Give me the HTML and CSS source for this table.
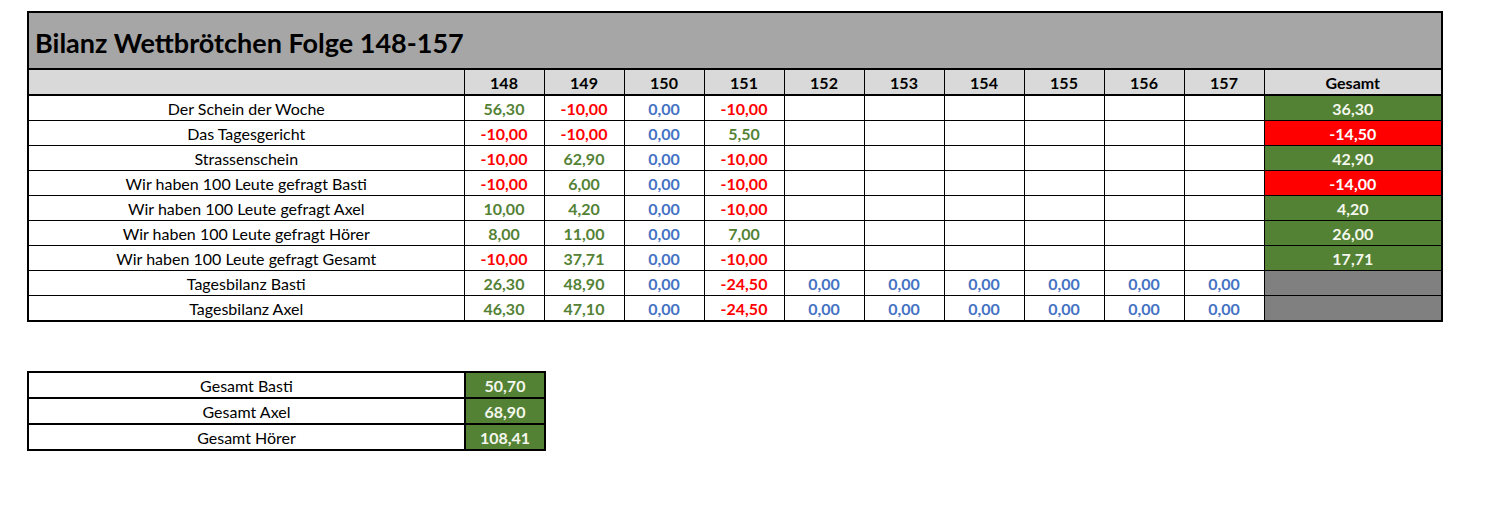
FILE: index.html
```html
<!DOCTYPE html>
<html lang="de">
<head>
<meta charset="utf-8">
<title>Bilanz Wettbrötchen</title>
<link rel="stylesheet" href="styles.css">
</head>
<body>
<table class="sheet">
  <colgroup>
    <col class="c-label">
    <col class="c-num"><col class="c-num"><col class="c-num"><col class="c-num"><col class="c-num">
    <col class="c-num"><col class="c-num"><col class="c-num"><col class="c-num"><col class="c-num">
    <col class="c-total">
  </colgroup>
  <tr class="title-row"><td colspan="12" class="title">Bilanz Wettbrötchen Folge 148-157</td></tr>
  <tr class="head-row">
    <td></td><td>148</td><td>149</td><td>150</td><td>151</td><td>152</td><td>153</td><td>154</td><td>155</td><td>156</td><td>157</td><td>Gesamt</td>
  </tr>
  <tr><td class="label">Der Schein der Woche</td><td class="pos">56,30</td><td class="neg">-10,00</td><td class="zero">0,00</td><td class="neg">-10,00</td><td></td><td></td><td></td><td></td><td></td><td></td><td class="tot-pos">36,30</td></tr>
  <tr><td class="label">Das Tagesgericht</td><td class="neg">-10,00</td><td class="neg">-10,00</td><td class="zero">0,00</td><td class="pos">5,50</td><td></td><td></td><td></td><td></td><td></td><td></td><td class="tot-neg">-14,50</td></tr>
  <tr><td class="label">Strassenschein</td><td class="neg">-10,00</td><td class="pos">62,90</td><td class="zero">0,00</td><td class="neg">-10,00</td><td></td><td></td><td></td><td></td><td></td><td></td><td class="tot-pos">42,90</td></tr>
  <tr><td class="label">Wir haben 100 Leute gefragt Basti</td><td class="neg">-10,00</td><td class="pos">6,00</td><td class="zero">0,00</td><td class="neg">-10,00</td><td></td><td></td><td></td><td></td><td></td><td></td><td class="tot-neg">-14,00</td></tr>
  <tr><td class="label">Wir haben 100 Leute gefragt Axel</td><td class="pos">10,00</td><td class="pos">4,20</td><td class="zero">0,00</td><td class="neg">-10,00</td><td></td><td></td><td></td><td></td><td></td><td></td><td class="tot-pos">4,20</td></tr>
  <tr><td class="label">Wir haben 100 Leute gefragt Hörer</td><td class="pos">8,00</td><td class="pos">11,00</td><td class="zero">0,00</td><td class="pos">7,00</td><td></td><td></td><td></td><td></td><td></td><td></td><td class="tot-pos">26,00</td></tr>
  <tr><td class="label">Wir haben 100 Leute gefragt Gesamt</td><td class="neg">-10,00</td><td class="pos">37,71</td><td class="zero">0,00</td><td class="neg">-10,00</td><td></td><td></td><td></td><td></td><td></td><td></td><td class="tot-pos">17,71</td></tr>
  <tr><td class="label">Tagesbilanz Basti</td><td class="pos">26,30</td><td class="pos">48,90</td><td class="zero">0,00</td><td class="neg">-24,50</td><td class="zero">0,00</td><td class="zero">0,00</td><td class="zero">0,00</td><td class="zero">0,00</td><td class="zero">0,00</td><td class="zero">0,00</td><td class="tot-gray"></td></tr>
  <tr><td class="label">Tagesbilanz Axel</td><td class="pos">46,30</td><td class="pos">47,10</td><td class="zero">0,00</td><td class="neg">-24,50</td><td class="zero">0,00</td><td class="zero">0,00</td><td class="zero">0,00</td><td class="zero">0,00</td><td class="zero">0,00</td><td class="zero">0,00</td><td class="tot-gray"></td></tr>
</table>

<table class="summary">
  <colgroup><col class="c-label"><col class="c-num"></colgroup>
  <tr><td class="label">Gesamt Basti</td><td class="tot-pos">50,70</td></tr>
  <tr><td class="label">Gesamt Axel</td><td class="tot-pos">68,90</td></tr>
  <tr><td class="label">Gesamt Hörer</td><td class="tot-pos">108,41</td></tr>
</table>
</body>
</html>
```
FILE: styles.css
```css
html, body {
  margin: 0;
  padding: 0;
  background: #ffffff;
}
body {
  padding: 11px 0 0 27px;
  font-family: Lato, "Open Sans", "Liberation Sans", sans-serif;
  font-size: 16px;
  color: #000;
}
table {
  border-collapse: collapse;
  table-layout: fixed;
}
td {
  padding: 0;
  text-align: center;
  white-space: nowrap;
  line-height: 19px;
  overflow: hidden;
}
.sheet {
  width: 1414px;
  border: 2px solid #000;
}
.c-label { width: 436px; }
.c-num { width: 80px; }
.c-total { width: 178px; }

.sheet td {
  border: 1px solid #000;
  height: 24px;
}
.sheet .title-row td {
  background: #a6a6a6;
  height: 51px;
  border: 2px solid #000;
  text-align: left;
  padding: 4px 0 0 6px;
  font-size: 27px;
  font-weight: 700;
  line-height: 30px;
}
.sheet .head-row td {
  background: #d9d9d9;
  font-weight: 700;
  height: 24px;
  border-bottom: 2px solid #000;
}
.sheet td:last-child {
  border-right: 2px solid #000;
}
.pos, .neg, .zero, .tot-pos, .tot-neg {
  font-weight: 700;
}
.pos { color: #548235; }
.neg { color: #ff0000; }
.zero { color: #4472c4; }
.tot-pos { background: #548235; color: #f4f7ee; }
.tot-neg { background: #ff0000; color: #ffffff; }
.tot-gray { background: #808080; }

.summary {
  margin-top: 49px;
  width: 517px;
  border: 2px solid #000;
}
.summary .c-label { width: 437px; }
.summary .c-num { width: 80px; }
.summary td {
  border: 2px solid #000;
  height: 24px;
}
```
